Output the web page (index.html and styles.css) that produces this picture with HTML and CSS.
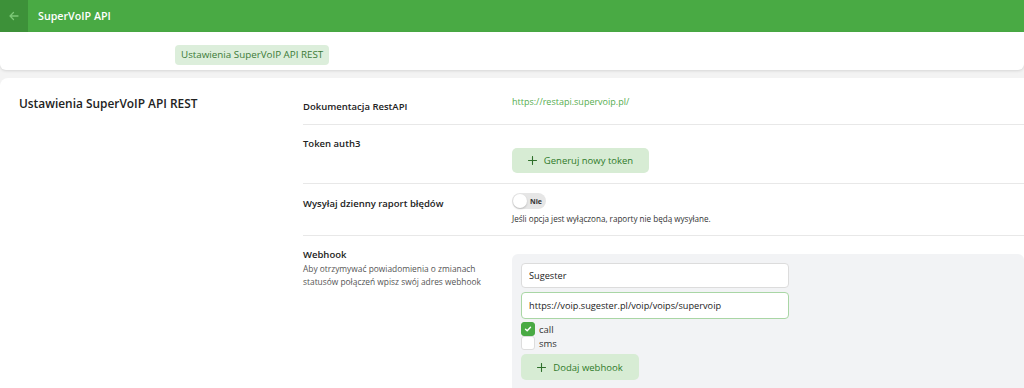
FILE: index.html
```html
<!DOCTYPE html>
<html lang="pl">
<head>
    <meta charset="UTF-8">
    <meta name="viewport" content="width=device-width, initial-scale=1.0">
    <title>SuperVoIP API</title>
    <link rel="stylesheet" href="styles.css">
</head>
<body>
    <header class="topbar">
        <a class="back-btn" href="#">
            <svg width="12" height="12" viewBox="0 0 12 12" fill="none" stroke="#7cc877" stroke-width="1.3" stroke-linecap="round" stroke-linejoin="round">
                <path d="M10 6H2M5.5 2.5L2 6l3.5 3.5"/>
            </svg>
        </a>
        <span class="topbar-title">SuperVoIP API</span>
    </header>

    <div class="subbar">
        <span class="crumb">Ustawienia SuperVoIP API REST</span>
    </div>

    <main class="card">
        <h2 class="card-title">Ustawienia SuperVoIP API REST</h2>

        <div class="rows">
            <div class="row">
                <div class="label">Dokumentacja RestAPI</div>
                <div class="value">
                    <a class="doc-link" href="#">https://restapi.supervoip.pl/</a>
                </div>
            </div>

            <div class="row">
                <div class="label">Token auth3</div>
                <div class="value">
                    <button class="btn btn-token">
                        <svg class="plus" width="9" height="9" viewBox="0 0 9 9" stroke="#2f6f2b" stroke-width="1.1" stroke-linecap="round"><path d="M4.5 0.5v8M0.5 4.5h8"/></svg>
                        Generuj nowy token
                    </button>
                </div>
            </div>

            <div class="row">
                <div class="label label-mid">Wysyłaj dzienny raport błędów</div>
                <div class="value">
                    <div class="toggle">
                        <span class="knob"></span>
                        <span class="toggle-text">Nie</span>
                    </div>
                    <p class="hint">Jeśli opcja jest wyłączona, raporty nie będą wysyłane.</p>
                </div>
            </div>

            <div class="row row-last">
                <div class="label">
                    Webhook
                    <p class="desc">Aby otrzymywać powiadomienia o zmianach statusów połączeń wpisz swój adres webhook</p>
                </div>
                <div class="value">
                    <div class="panel">
                        <input class="field" type="text" value="Sugester">
                        <input class="field field-active" type="text" value="https://voip.sugester.pl/voip/voips/supervoip">
                        <label class="check">
                            <span class="box box-on">
                                <svg width="8" height="8" viewBox="0 0 8 8" fill="none" stroke="#fff" stroke-width="1.4" stroke-linecap="round" stroke-linejoin="round"><path d="M1.5 4.2l1.7 1.6L6.5 2.3"/></svg>
                            </span>
                            call
                        </label>
                        <label class="check">
                            <span class="box"></span>
                            sms
                        </label>
                        <button class="btn btn-hook">
                            <svg class="plus" width="9" height="9" viewBox="0 0 9 9" stroke="#2f6f2b" stroke-width="1.1" stroke-linecap="round"><path d="M4.5 0.5v8M0.5 4.5h8"/></svg>
                            Dodaj webhook
                        </button>
                    </div>
                </div>
            </div>
        </div>
    </main>
</body>
</html>
```

FILE: styles.css
```css
body {
    margin: 0;
    background: #f3f3f3;
    font-family: "Open Sans", "Liberation Sans", sans-serif;
    color: #222;
    overflow: hidden;
    height: 388px;
}
.topbar {
    height: 32px;
    background: #49aa44;
    display: flex;
    align-items: center;
}
.back-btn {
    width: 28px;
    height: 32px;
    background: #3d9139;
    display: flex;
    align-items: center;
    justify-content: center;
}
.topbar-title {
    margin-left: 10px;
    color: #fff;
    font-size: 10.7px;
    font-weight: 600;
}
.subbar {
    height: 38px;
    background: #fff;
    border-radius: 0 0 6px 6px;
    box-shadow: 0 1px 3px rgba(0, 0, 0, 0.12);
    box-sizing: border-box;
    padding: 9px 0 0 175px;
}
.crumb {
    display: inline-block;
    height: 20px;
    line-height: 20px;
    padding: 0 6px;
    background: #dceedb;
    color: #3b7a36;
    font-size: 9.8px;
    border-radius: 4px;
}
.card {
    margin-top: 8px;
    background: #fff;
    border-radius: 8px 0 0 0;
    display: flex;
    padding-top: 10px;
    height: 300px;
    overflow: hidden;
}
.card-title {
    width: 284px;
    margin: 0;
    padding: 7px 0 0 19px;
    font-size: 11.9px;
    font-weight: 600;
    line-height: 16px;
}
.rows {
    flex: 1;
}
.row {
    display: flex;
    padding: 12px 0 10px;
    border-bottom: 1px solid #e8e8e8;
}
.row-last {
    border-bottom: none;
}
.label {
    width: 209px;
    font-size: 9.5px;
    font-weight: 600;
    line-height: 14px;
}
.label-mid {
    padding-top: 1px;
}
.value {
    flex: 1;
}
.doc-link {
    display: block;
    margin-top: -5px;
    color: #55ad50;
    font-size: 9px;
    line-height: 14px;
    text-decoration: none;
}
.btn {
    border: none;
    border-radius: 5px;
    background: #d7ecd4;
    color: #2f7a2a;
    font-family: inherit;
    font-size: 9.5px;
    cursor: pointer;
    display: flex;
    align-items: center;
    justify-content: center;
    padding: 0;
}
.plus {
    margin-right: 7px;
}
.btn-token {
    margin-top: 11px;
    height: 25px;
    width: 137px;
}
.toggle {
    margin-top: -3px;
    width: 34px;
    height: 16px;
    border-radius: 8px;
    background: #e6e6e6;
    display: flex;
    align-items: center;
    box-sizing: border-box;
    padding: 0 1px;
}
.knob {
    width: 14px;
    height: 14px;
    border-radius: 50%;
    background: #fff;
    box-shadow: 0 1px 2px rgba(0, 0, 0, 0.2);
}
.toggle-text {
    margin-left: 3px;
    font-size: 7px;
    font-weight: 700;
    color: #333;
}
.hint {
    margin: 4px 0 0;
    font-size: 8.1px;
    line-height: 12px;
    color: #333;
}
.desc {
    margin: 0;
    font-size: 8.4px;
    font-weight: 400;
    line-height: 13px;
    color: #555;
}
.panel {
    margin-top: 6px;
    background: #f2f3f5;
    border-radius: 6px 6px 0 0;
    padding: 9px;
    height: 160px;
    display: flex;
    flex-direction: column;
    align-items: flex-start;
}
.field {
    box-sizing: border-box;
    width: 268px;
    height: 25px;
    padding: 0 7px;
    border: 1px solid #dcdcdc;
    border-radius: 4px;
    font-family: inherit;
    font-size: 9.2px;
    color: #222;
    background: #fff;
    margin-bottom: 4px;
}
.field-active {
    height: 27px;
    margin-bottom: 3px;
    border: 1.5px solid #a9d6a5;
}
.check {
    display: flex;
    align-items: center;
    height: 14px;
    font-size: 9.5px;
    color: #333;
}
.box {
    width: 14px;
    height: 14px;
    box-sizing: border-box;
    border: 1px solid #ddd;
    border-radius: 3px;
    background: #fff;
    margin-right: 4px;
    display: flex;
    align-items: center;
    justify-content: center;
}
.box-on {
    background: #49aa44;
    border-color: #49aa44;
}
.btn-hook {
    margin-top: 4px;
    height: 26px;
    width: 118px;
}
```
